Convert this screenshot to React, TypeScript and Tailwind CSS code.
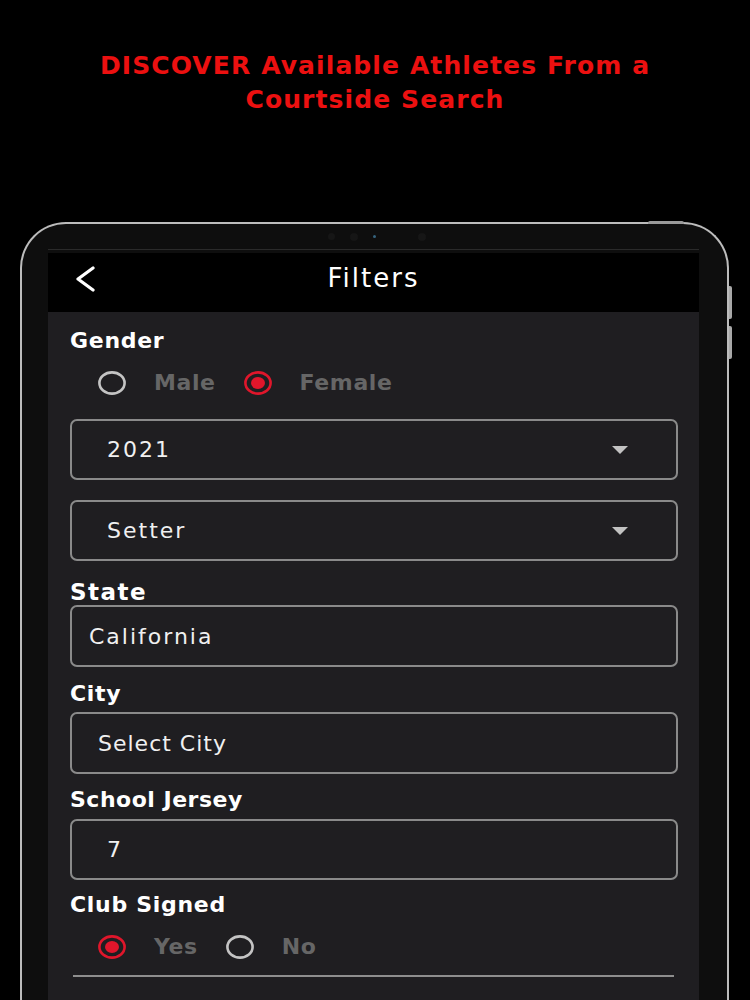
import React from 'react';

const dejavu = { fontFamily: '"DejaVu Sans", "Liberation Sans", sans-serif' };

const Radio: React.FC<{ checked?: boolean; label: string }> = ({ checked, label }) => (
  <div className="flex items-center gap-[28px]">
    <svg width="28" height="24" viewBox="0 0 28 24">
      <ellipse
        cx="14"
        cy="12"
        rx="12.6"
        ry="10.6"
        fill="none"
        stroke={checked ? '#e0162b' : '#c4c4c4'}
        strokeWidth="2.6"
      />
      {checked && <ellipse cx="14" cy="12" rx="7" ry="6" fill="#e0162b" />}
    </svg>
    <span className="text-[22px] font-bold leading-[28px] tracking-[0.6px] text-[#666666]">{label}</span>
  </div>
);

const Caret = () => (
  <svg width="16" height="8" viewBox="0 0 16 8">
    <polygon points="0,0 16,0 8,8" fill="#c2c2c2" />
  </svg>
);

const Dropdown: React.FC<{ value: string; className?: string }> = ({ value, className }) => (
  <div
    className={`flex h-[61px] items-center justify-between rounded-[7px] border-2 border-[#8a8a8a] pl-[35px] pr-[48px] ${className ?? ''}`}
  >
    <span className="text-[22px] tracking-[2px] text-[#f0f0f0]">{value}</span>
    <Caret />
  </div>
);

const Field: React.FC<{ value: string; pad: string; tracking: string; className?: string }> = ({
  value,
  pad,
  tracking,
  className,
}) => (
  <div className={`flex items-center rounded-[7px] border-2 border-[#8a8a8a] ${pad} ${className ?? ''}`}>
    <span className={`text-[22px] text-[#f0f0f0] ${tracking}`}>{value}</span>
  </div>
);

export default function App() {
  return (
    <div className="h-[1000px] w-[750px] overflow-hidden bg-black" style={dejavu}>
      {/* promo heading */}
      <div className="pt-[49px] text-center text-[25px] font-bold leading-[34px] tracking-[1.1px] text-[#ec1010]">
        <div>DISCOVER Available Athletes From a</div>
        <div>Courtside Search</div>
      </div>

      {/* tablet frame */}
      <div className="relative ml-[20px] mt-[105px] w-[709px] rounded-t-[46px] border-2 border-b-0 border-[#bcbcbc] bg-[#0e0e0e] pb-[40px] pl-[26px]">
        <span className="absolute -top-[3px] left-[626px] h-[3px] w-[36px] rounded-t-[2px] bg-[#9a9a9a]" />
        <span className="absolute -right-[5px] top-[62px] h-[33px] w-[3px] rounded-r-[2px] bg-[#a8a8a8]" />
        <span className="absolute -right-[5px] top-[102px] h-[33px] w-[3px] rounded-r-[2px] bg-[#a8a8a8]" />

        {/* camera */}
        <div className="flex h-[25px] items-center pl-[280px]">
          <span className="h-[7px] w-[7px] rounded-full bg-[#161616]" />
          <span className="ml-[15px] h-[8px] w-[8px] rounded-full bg-[#161616]" />
          <span className="ml-[15px] h-[3px] w-[3px] rounded-full bg-[#35637e]" />
          <span className="ml-[42px] h-[8px] w-[8px] rounded-full bg-[#161616]" />
        </div>

        {/* screen */}
        <div className="w-[651px] border-t border-[#2a2a2a]">
          <div className="mt-[3px] flex h-[59px] items-center bg-black pb-[8px]">
            <div className="w-[60px] pl-[26px]">
              <svg width="22" height="26" viewBox="0 0 22 26">
                <polyline
                  points="19,2 4,13 19,24"
                  fill="none"
                  stroke="#ffffff"
                  strokeWidth="3.2"
                  strokeLinecap="round"
                  strokeLinejoin="round"
                />
              </svg>
            </div>
            <div className="flex-1 text-center text-[26px] tracking-[2px] text-white">Filters</div>
            <div className="w-[60px]" />
          </div>

          <div className="bg-[#1f1e21] pb-[60px] pl-[22px] pr-[21px] pt-[15px]">
            <div className="text-[22px] font-bold leading-[28px] tracking-[0.7px] text-white">Gender</div>
            <div className="mt-[8px] flex h-[40px] items-center gap-[28px] pl-[28px]">
              <Radio label="Male" />
              <Radio label="Female" checked />
            </div>

            <Dropdown value="2021" className="mt-[16px]" />
            <Dropdown value="Setter" className="mt-[20px]" />

            <div className="mt-[18px] text-[23px] font-bold leading-[26px] tracking-[1.5px] text-white">
              State
            </div>
            <Field value="California" pad="h-[62px] pl-[17px]" tracking="tracking-[2px]" />

            <div className="mt-[14px] mb-[5px] text-[22px] font-bold leading-[26px] tracking-[0.7px] text-white">
              City
            </div>
            <Field value="Select City" pad="h-[62px] pl-[26px]" tracking="tracking-[1px]" />

            <div className="mt-[13px] mb-[6px] text-[22px] font-bold leading-[26px] tracking-[0.5px] text-white">
              School Jersey
            </div>
            <Field value="7" pad="h-[61px] pl-[35px]" tracking="tracking-[2px]" />

            <div className="mt-[12px] text-[22px] font-bold leading-[26px] tracking-[0.7px] text-white">
              Club Signed
            </div>
            <div className="mt-[9px] flex h-[40px] items-center gap-[28px] pl-[28px]">
              <Radio label="Yes" checked />
              <Radio label="No" />
            </div>
            <div className="ml-[3px] mr-[4px] mt-[8px] h-[2px] bg-[#8e8e8e]" />
          </div>
        </div>
      </div>
    </div>
  );
}
